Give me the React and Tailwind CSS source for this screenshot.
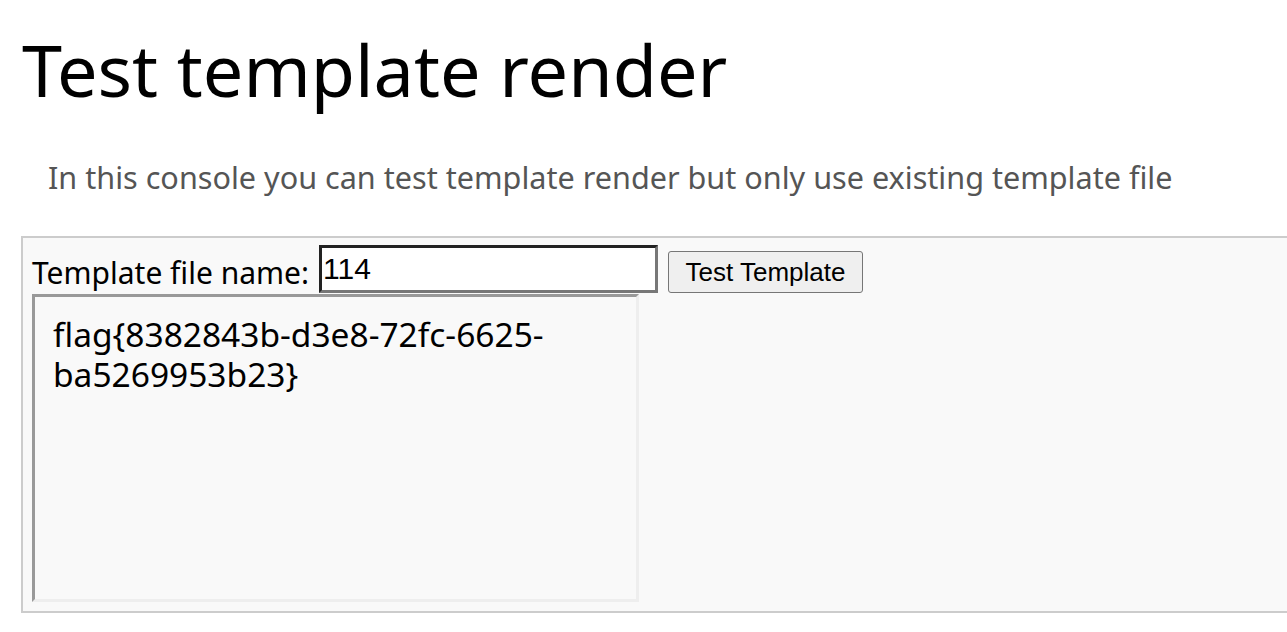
export default function App() {
  return (
    <div className="w-screen h-screen overflow-hidden bg-white text-black font-['Noto_Sans',sans-serif]">
      <h1 className="ml-[22px] pt-[24px] text-[72px] leading-[90px] font-normal">
        Test template render
      </h1>

      <p className="ml-[48px] mt-[43px] text-[30.6px] leading-[40px] text-[#555]">
        In this console you can test template render but only use existing template file
      </p>

      <div className="mt-[39px] ml-[21px] w-[1300px] h-[377px] border-2 border-[#ccc] bg-[#f9f9f9] pl-[9px] pt-[7px]">
        <div className="flex items-end">
          <label className="text-[30px] leading-[40px] mr-[10px]">Template file name:</label>
          <input
            type="text"
            defaultValue="114"
            className="w-[339px] h-[48px] border-[3px] border-t-[#222] border-l-[#222] border-b-[#777] border-r-[#777] bg-white px-[1px] text-[30px] font-['Liberation_Sans',Arial,sans-serif] outline-none"
          />
          <button className="ml-[10px] w-[195px] h-[42px] rounded-[3px] border border-[#767676] bg-[#efefef] text-[26px] font-['Liberation_Sans',Arial,sans-serif]">
            Test Template
          </button>
        </div>
        <div className="mt-[1px] w-[607px] h-[308px] border-[3px] border-t-[#999] border-l-[#999] border-b-[#eee] border-r-[#eee] px-[18px] pt-[17px] text-[33.5px] leading-[40px] break-words">
          flag{'{'}8382843b-d3e8-72fc-6625-ba5269953b23{'}'}
        </div>
      </div>
    </div>
  );
}
